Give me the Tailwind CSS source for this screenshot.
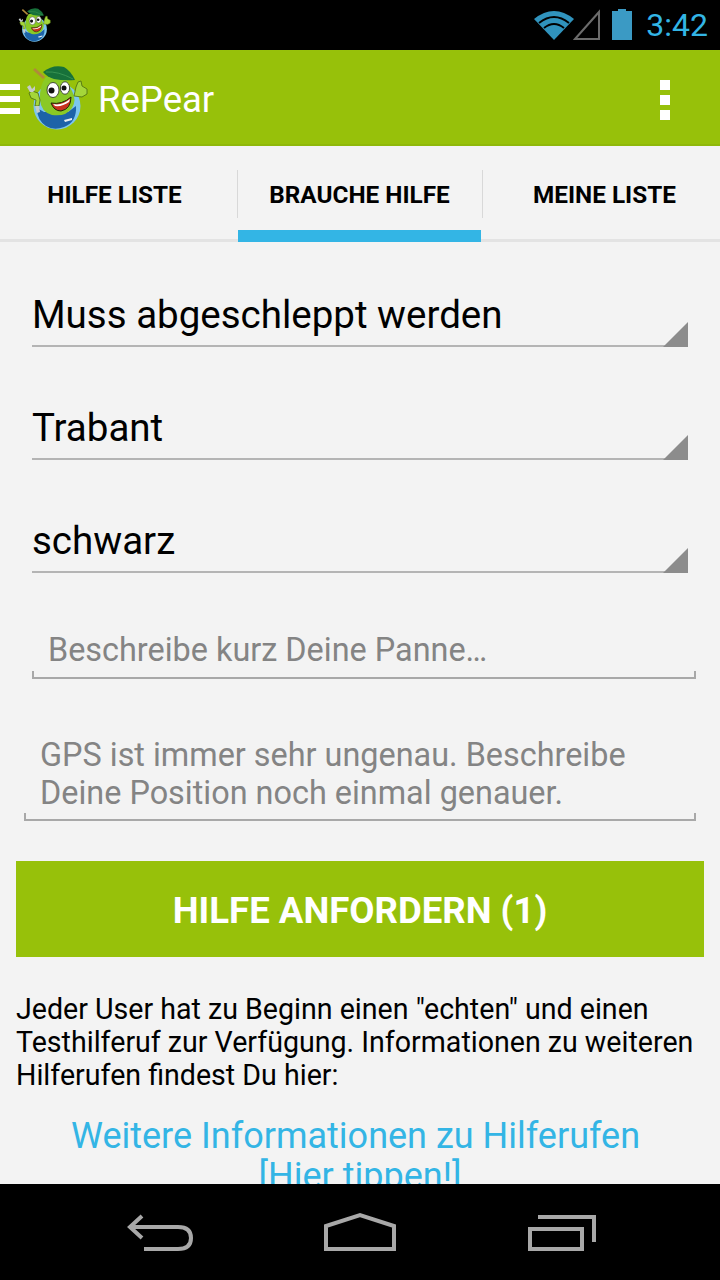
<!DOCTYPE html>
<html lang="de">
<head>
  <meta charset="UTF-8">
  <meta name="viewport" content="width=device-width, initial-scale=1.0">
  <title>RePear</title>
  <script src="https://cdn.jsdelivr.net/npm/@tailwindcss/browser@4"></script>
</head>
<body class="bg-[#f3f3f3] font-['Roboto',sans-serif]">
  <!-- mascot, used twice -->
  <svg class="hidden">
    <symbol id="pear" viewBox="0 0 68 72">
      <path d="M10 7 L20 16" stroke="#b08a3a" stroke-width="3"/>
      <circle cx="33" cy="44" r="23.5" fill="#7cc6ee"/>
      <path d="M13 46 L20 50 L44 50 L52 44 Q53 60 40 65 Q30 69 22 64 Q13 58 13 46Z" fill="#1d63a8"/>
      <path d="M22 15 Q15 24 16 38 Q17 50 28 53 Q42 55 48 46 Q53 38 48 29 Q43 20 42 14Z" fill="#8ac926"/>
      <path d="M19 10 Q29 2 40 5 Q47 9 51 18 Q40 19 30 17 Q23 15 19 10Z" fill="#17713a"/>
      <path d="M22 10 Q34 9 49 17" fill="none" stroke="#3f9a58" stroke-width="0.8"/>
      <ellipse cx="29" cy="28" rx="6" ry="7.5" fill="#fff" stroke="#222" stroke-width="0.8"/>
      <ellipse cx="41" cy="26" rx="4.6" ry="6.2" fill="#fff" stroke="#222" stroke-width="0.8"/>
      <circle cx="27.5" cy="28.5" r="3" fill="#111"/>
      <circle cx="40" cy="26" r="2.5" fill="#111"/>
      <path d="M27 41 Q38 43 47 35 Q47 47 37 49 Q30 49 27 41Z" fill="#c8321e" stroke="#1a2a08" stroke-width="1"/>
      <path d="M29 42 Q38 44 46 37 L45 40 Q38 45 31 44Z" fill="#fff"/>
      <path d="M50 34 L52 25 L54 20 L57 19 L58 24 L63 27 L63 32 L58 35 Z" fill="#a5d63a" stroke="#4a6a12" stroke-width="0.8"/>
      <path d="M12 38 L7 36 L5 31 L8 29 L14 31 L16 38 L15 44 L11 44Z" fill="#a5d63a" stroke="#4a6a12" stroke-width="0.8"/>
      <path d="M3 25 L6 23 L8 27 L11 24 L11 28 L9 30 L6 30Z M11 44 L15 44 L16 50 L13 51Z" fill="#c4cbcb"/>
      <path d="M40 58 L48 56 L48 58 L41 60Z" fill="#e8eef2"/>
    </symbol>
  </svg>

  <div class="flex flex-col h-[1280px] w-[720px] overflow-hidden">
    <!-- status bar -->
    <div class="h-[50px] bg-black flex items-center pl-[17px] pr-[12px] shrink-0">
      <svg class="w-[36px] h-[38px]"><use href="#pear"/></svg>
      <div class="ml-auto flex items-center">
        <svg class="w-[40px] h-[30px]" viewBox="0 0 40 30">
          <path d="M0 9 Q20 -7 40 9 L20 30Z" fill="#3093bd"/>
          <path d="M5 13 Q20 1 35 13 M10 18 Q20 10 30 18" fill="none" stroke="#000" stroke-width="2"/>
        </svg>
        <svg class="w-[28px] h-[32px] ml-[-1px]" viewBox="0 0 28 32">
          <path d="M2 30 L26 3 V30Z" fill="none" stroke="#6b6b6b" stroke-width="2"/>
        </svg>
        <svg class="w-[22px] h-[32px] ml-[10px]" viewBox="0 0 22 32">
          <path d="M7 0 H15 V2 H21 V31 H1 V2 H7Z" fill="#3b9ac4"/>
        </svg>
        <span class="ml-[13px] text-[32px] leading-none text-[#33b5e5]">3:42</span>
      </div>
    </div>

    <!-- action bar -->
    <div class="h-[96px] bg-[#97c10a] border-b-2 border-[#8fb80a] flex items-center shrink-0">
      <div class="w-[20px] flex flex-col gap-[6px] mt-[4px]">
        <div class="h-[6px] bg-white"></div>
        <div class="h-[6px] bg-white"></div>
        <div class="h-[6px] bg-white"></div>
      </div>
      <svg class="w-[68px] h-[72px] ml-[4px] mt-[2px]"><use href="#pear"/></svg>
      <span class="ml-[6px] mt-[6px] text-[36.5px] leading-none text-white">RePear</span>
      <div class="ml-auto mr-[50px] mt-[5px] flex flex-col gap-[5px]">
        <div class="w-[10px] h-[10px] bg-white"></div>
        <div class="w-[10px] h-[10px] bg-white"></div>
        <div class="w-[10px] h-[10px] bg-white"></div>
      </div>
    </div>

    <!-- tabs -->
    <div class="relative h-[96px] flex shrink-0 border-b-[3px] border-[#e3e3e3]">
      <div class="w-[237px] flex justify-center pr-[8px] pt-[35px] text-[24.3px] leading-[28px] font-bold text-black">HILFE LISTE</div>
      <div class="w-[245px] flex justify-center pt-[35px] text-[24.3px] leading-[28px] font-bold text-black">BRAUCHE HILFE</div>
      <div class="flex-1 flex justify-center pl-[7px] pt-[35px] text-[24.3px] leading-[28px] font-bold text-black">MEINE LISTE</div>
      <div class="absolute left-[237px] top-[24px] w-px h-[48px] bg-[#d8d8d8]"></div>
      <div class="absolute left-[482px] top-[24px] w-px h-[48px] bg-[#d8d8d8]"></div>
      <div class="absolute left-[238px] top-[84px] w-[243px] h-[12px] bg-[#33b5e5]"></div>
    </div>

    <!-- form -->
    <div class="flex-1 min-h-0 overflow-hidden">
      <div class="mx-[32px] mt-[48px] relative h-[57px] border-b-2 border-[#b4b4b4] text-[38.5px] leading-[50px] text-black">Muss abgeschleppt werden
        <div class="absolute right-0 bottom-[-2px] w-[25px] h-[25px] bg-[#8c8c8c] [clip-path:polygon(100%_0,100%_100%,0_100%)]"></div>
      </div>
      <div class="mx-[32px] mt-[56px] relative h-[57px] border-b-2 border-[#b4b4b4] text-[38.5px] leading-[50px] text-black">Trabant
        <div class="absolute right-0 bottom-[-2px] w-[25px] h-[25px] bg-[#8c8c8c] [clip-path:polygon(100%_0,100%_100%,0_100%)]"></div>
      </div>
      <div class="mx-[32px] mt-[56px] relative h-[57px] border-b-2 border-[#b4b4b4] text-[38.5px] leading-[50px] text-black">schwarz
        <div class="absolute right-0 bottom-[-2px] w-[25px] h-[25px] bg-[#8c8c8c] [clip-path:polygon(100%_0,100%_100%,0_100%)]"></div>
      </div>

      <div class="ml-[32px] mr-[24px] mt-[50px] relative h-[56px] pl-[16px] pt-[8px] text-[32.4px] leading-[38px] text-[#848484]">Beschreibe kurz Deine Panne…
        <div class="absolute left-0 right-0 bottom-0 h-[8px] border-x-2 border-b-2 border-[#a8a8a8]"></div>
      </div>

      <div class="ml-[24px] mr-[24px] mt-[56px] relative h-[86px] pl-[16px] pt-[1px] text-[32.4px] leading-[38px] text-[#848484]">GPS ist immer sehr ungenau. Beschreibe<br>Deine Position noch einmal genauer.
        <div class="absolute left-0 right-0 bottom-0 h-[8px] border-x-2 border-b-2 border-[#a8a8a8]"></div>
      </div>

      <div class="mx-[16px] mt-[40px] h-[96px] pt-[4px] bg-[#97c10a] flex items-center justify-center text-[36.6px] font-bold text-white">HILFE ANFORDERN (1)</div>

      <p class="mx-[16px] mt-[36px] text-[28.6px] leading-[33px] text-black">Jeder User hat zu Beginn einen "echten" und einen Testhilferuf zur Verfügung. Informationen zu weiteren Hilferufen findest Du hier:</p>

      <p class="mx-[16px] mt-[24px] text-center text-[36px] leading-[40px] text-[#33b5e5]">Weitere Informationen zu Hilferufen&nbsp;<br>[Hier tippen!]</p>
    </div>

    <!-- nav bar -->
    <div class="h-[96px] bg-black flex items-center justify-center shrink-0 relative">
      <svg class="absolute left-[120px] top-[28px] w-[80px] h-[44px]" viewBox="0 0 80 44" fill="none" stroke="#a8a8a8" stroke-width="4">
        <path d="M22 4 L10 15 L22 26 M10 15 H58 Q71 15 71 26 Q71 37 58 37 H24"/>
      </svg>
      <svg class="absolute left-[320px] top-[28px] w-[80px] h-[44px]" viewBox="0 0 80 44" fill="none" stroke="#a8a8a8" stroke-width="4">
        <path d="M6 37 V14 L40 3 L74 14 V37Z" stroke-linejoin="miter"/>
      </svg>
      <svg class="absolute left-[520px] top-[28px] w-[80px] h-[44px]" viewBox="0 0 80 44" fill="none" stroke="#a8a8a8" stroke-width="4">
        <path d="M10 17 H62 V37 H10Z M18 5 H74 V30"/>
      </svg>
    </div>
  </div>
</body>
</html>
